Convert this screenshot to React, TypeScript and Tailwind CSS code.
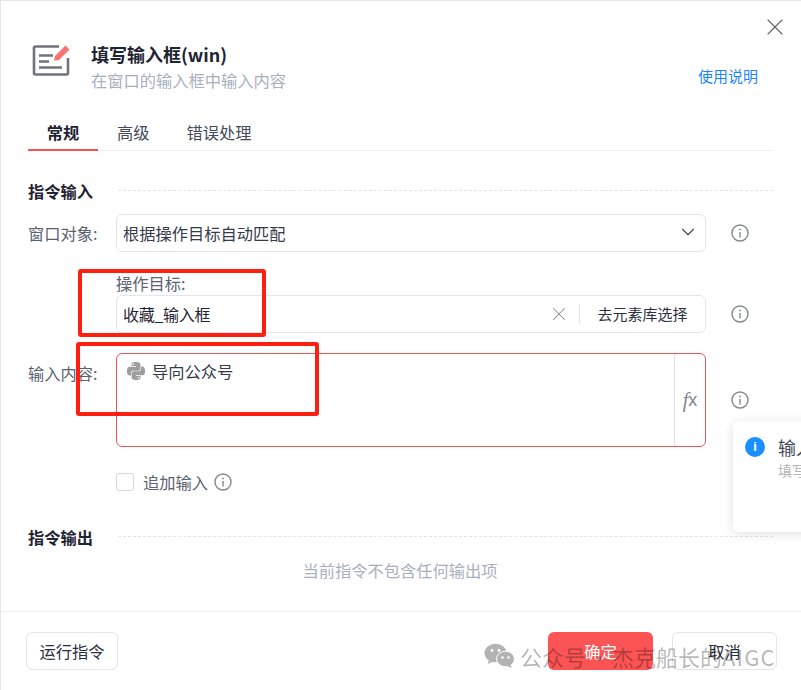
import React from 'react';
import { ChevronDown, X } from 'lucide-react';
import { SiPython } from 'react-icons/si';

const FONT = 'font-["Noto_Sans_CJK_SC","Noto_Sans",sans-serif]';

const InfoIcon = ({ size = 18 }: { size?: number }) => (
    <svg width={size} height={size} viewBox="0 0 18 18" fill="none" className="shrink-0">
        <circle cx="9" cy="9" r="8" stroke="#85888f" strokeWidth="1.4" />
        <circle cx="9" cy="5.4" r="0.9" fill="#85888f" />
        <path d="M9 8v5.4" stroke="#85888f" strokeWidth="1.4" />
    </svg>
);

const EditLogo = () => (
    <svg width="40" height="34" viewBox="0 0 40 34" fill="none">
        <path d="M27 3.5H3.5a1.5 1.5 0 0 0-1.5 1.5v25a1.5 1.5 0 0 0 1.500 1.500h31a1.500 1.500 0 0 0 1.500-1.500V15" stroke="#73737d" strokeWidth="2.6" />
        <path d="M7 12.500h14M7 18.500h10M7 24.500h23" stroke="#73737d" strokeWidth="2.4" />
        <path d="M22 17.500l1-4.500L33.500 2.500l4 4L27 17z" fill="#f77272" />
    </svg>
);

const WeChatIcon = () => (
    <svg width="31" height="26" viewBox="0 0 31 26">
        <ellipse cx="11.500" cy="10" rx="11" ry="9.300" fill="#b3b3b3" />
        <path d="M5 16l-1 5 6-3z" fill="#b3b3b3" />
        <ellipse cx="21.500" cy="16" rx="9" ry="7.800" fill="#b3b3b3" stroke="#fff" strokeWidth="1" />
        <path d="M26 21l2 4-5-2z" fill="#b3b3b3" />
        <circle cx="8" cy="7.500" r="1.400" fill="#fff" />
        <circle cx="15" cy="7.500" r="1.400" fill="#fff" />
        <circle cx="18.500" cy="14.500" r="1.200" fill="#fff" />
        <circle cx="24.500" cy="14.500" r="1.200" fill="#fff" />
    </svg>
);

const SectionTitle = ({ title }: { title: string }) => (
    <div className="flex items-center gap-[25px] h-6">
        <span className="text-[16.25px] font-semibold text-[#1f2433] leading-6 shrink-0">{title}</span>
        <div className="flex-1 border-t border-dashed border-[#e3e4e8] -mt-[2px]" />
    </div>
);

export default function App() {
    return (
        <div className={`relative w-[801px] h-[690px] overflow-hidden bg-white border-t border-l border-[#e5e6eb] ${FONT}`}>
            <button className="absolute top-[12px] right-[12px] text-[#666]">
                <X size={28} strokeWidth={1} />
            </button>

            {/* Header */}
            <div className="flex items-start pl-[31px] pr-[43px] pt-[42px] h-[108px]">
                <EditLogo />
                <div className="ml-[19px] -mt-[1px]">
                    <div className="text-[18px] font-semibold text-[#1f2433] leading-6">填写输入框(win)</div>
                    <div className="text-[16.25px] text-[#a9afbe] leading-6 mt-[2px]">在窗口的输入框中输入内容</div>
                </div>
                <a className="ml-auto mt-[21px] text-[15px] text-[#1a85ff] leading-6">使用说明</a>
            </div>

            {/* Tabs */}
            <div className="flex ml-[27px] mr-[28px] h-[42px] border-b border-[#eeeef4] text-[16.25px]">
                <div className="w-[70px] h-[42px] text-center leading-[46px] font-semibold text-[#1f2433] border-b-2 border-[#f55353]">常规</div>
                <div className="ml-[19px] leading-[46px] text-[#434a59]">高级</div>
                <div className="ml-[37px] leading-[46px] text-[#434a59]">错误处理</div>
            </div>

            <div className="pl-[27px] pr-[28px]">
                <div className="pt-[28px]">
                    <SectionTitle title="指令输入" />
                </div>

                <div className="flex items-center mt-[11px] h-[38px] text-[16.25px]">
                    <span className="w-[88px] shrink-0 text-[#5b6272]">窗口对象:</span>
                    <div className="flex items-center justify-between w-[590px] h-[38px] pl-[6px] pr-[6px] border border-[#e4e5ea] rounded-md text-[#363b48]">
                        <span>根据操作目标自动匹配</span>
                        <ChevronDown size={22} strokeWidth={1.3} className="text-[#434a59] -mt-[2px]" />
                    </div>
                    <span className="ml-[25px]"><InfoIcon /></span>
                </div>

                <div className="ml-[88px] mt-[19px] h-6 text-[16.25px] leading-6 text-[#5b6272]">操作目标:</div>
                <div className="flex items-center ml-[88px] h-[38px]">
                    <div className="flex items-center w-[590px] h-[38px] pl-[6px] border border-[#e4e5ea] rounded-md text-[#1f2433]">
                        <span className="text-[16px] tracking-[-0.3px] flex-1 -mt-[1px]">收藏_输入框</span>
                        <X size={22} strokeWidth={1.1} className="text-[#8f929b]" />
                        <div className="ml-[9px] w-px h-[20px] bg-[#e4e5ea]" />
                        <span className="w-[125px] text-center text-[15px] text-[#2b3040]">去元素库选择</span>
                    </div>
                    <span className="ml-[25px]"><InfoIcon /></span>
                </div>

                <div className="flex items-center mt-[20px] h-[94px] text-[16.25px]">
                    <span className="w-[88px] shrink-0 self-start pt-[8px] text-[#5b6272]">输入内容:</span>
                    <div className="flex w-[590px] h-[94px] border border-[#f55353] rounded-md">
                        <div className="flex flex-1 items-start gap-[7px] pl-[10px] pt-[8px]">
                            <SiPython size={18} className="shrink-0 text-[#9e9e9e]" />
                            <span className="text-[16.25px] leading-[22px] text-[#363b48] -mt-[2px]">导向公众号</span>
                        </div>
                        <div className="flex items-center justify-center w-[31px] border-l border-[#e1e2e8] text-[#808590]">
                            <span className="font-['Liberation_Serif',serif] italic text-[20px] leading-none">f</span>
                            <span className="font-['Liberation_Sans',sans-serif] text-[18px] leading-none">x</span>
                        </div>
                    </div>
                    <span className="ml-[25px]"><InfoIcon /></span>
                </div>

                <div className="flex items-center ml-[88px] mt-[26px] h-[18px]">
                    <div className="w-[18px] h-[18px] border border-[#d5d7de] rounded-[3px]" />
                    <span className="ml-[9px] text-[16.25px] text-[#5b6272]">追加输入</span>
                    <span className="ml-[6px]"><InfoIcon /></span>
                </div>

                <div className="mt-[34px]">
                    <SectionTitle title="指令输出" />
                </div>
                <div className="mt-[9px] h-6 pr-[1px] text-center text-[16.25px] leading-6 text-[#a9afbe]">当前指令不包含任何输出项</div>
            </div>

            {/* Footer */}
            <div className="absolute left-0 right-0 bottom-0 h-[79px] flex items-start pt-[20px] pl-[25px] pr-[24px] border-t border-[#eeeef0]">
                <button className="w-[92px] h-[38px] border border-[#e4e5ea] rounded-md text-[16.25px] text-[#2b3040]">运行指令</button>
                <button className="ml-auto w-[105px] h-[38px] rounded-md bg-[#fc5454] text-[16.25px] text-white">确定</button>
                <button className="ml-[19px] w-[105px] h-[38px] border border-[#e4e5ea] rounded-md text-[16.25px] text-[#2b3040]">取消</button>
            </div>

            {/* Notification */}
            <div className="absolute left-[732px] top-[420px] w-[120px] h-[111px] bg-white rounded-md shadow-[0_2px_12px_rgba(0,0,0,0.12)] pl-[12px] pt-[14px]">
                <div className="flex items-center gap-[13px]">
                    <div className="flex items-center justify-center w-5 h-5 rounded-full bg-[#1a8fff] text-white text-[13px] font-bold font-['Liberation_Sans',sans-serif]">i</div>
                    <span className="text-[18px] leading-6 text-[#434a59] whitespace-nowrap">输入内容</span>
                </div>
                <div className="ml-[33px] mt-[1px] text-[14px] leading-5 text-[#b5b5b5] whitespace-nowrap">填写内容</div>
            </div>

            {/* Annotation boxes */}
            <div className="absolute left-[77px] top-[268px] w-[188px] h-[68px] border-[4px] border-[#ff1f10] rounded-[3px]" />
            <div className="absolute left-[75px] top-[341px] w-[243px] h-[74px] border-[4px] border-[#ff1f10] rounded-[3px]" />

            {/* Watermark */}
            <div className="absolute left-[483px] top-[641px] flex items-center text-[22px] leading-7 text-black/30 whitespace-nowrap pointer-events-none">
                <WeChatIcon />
                <span className="ml-[5px]">公众号</span>
                <span className="w-[26px] text-center">·</span>
                <span>杰克船长的</span>
                <span className="tracking-[1.2px]">AIGC</span>
            </div>
        </div>
    );
}
